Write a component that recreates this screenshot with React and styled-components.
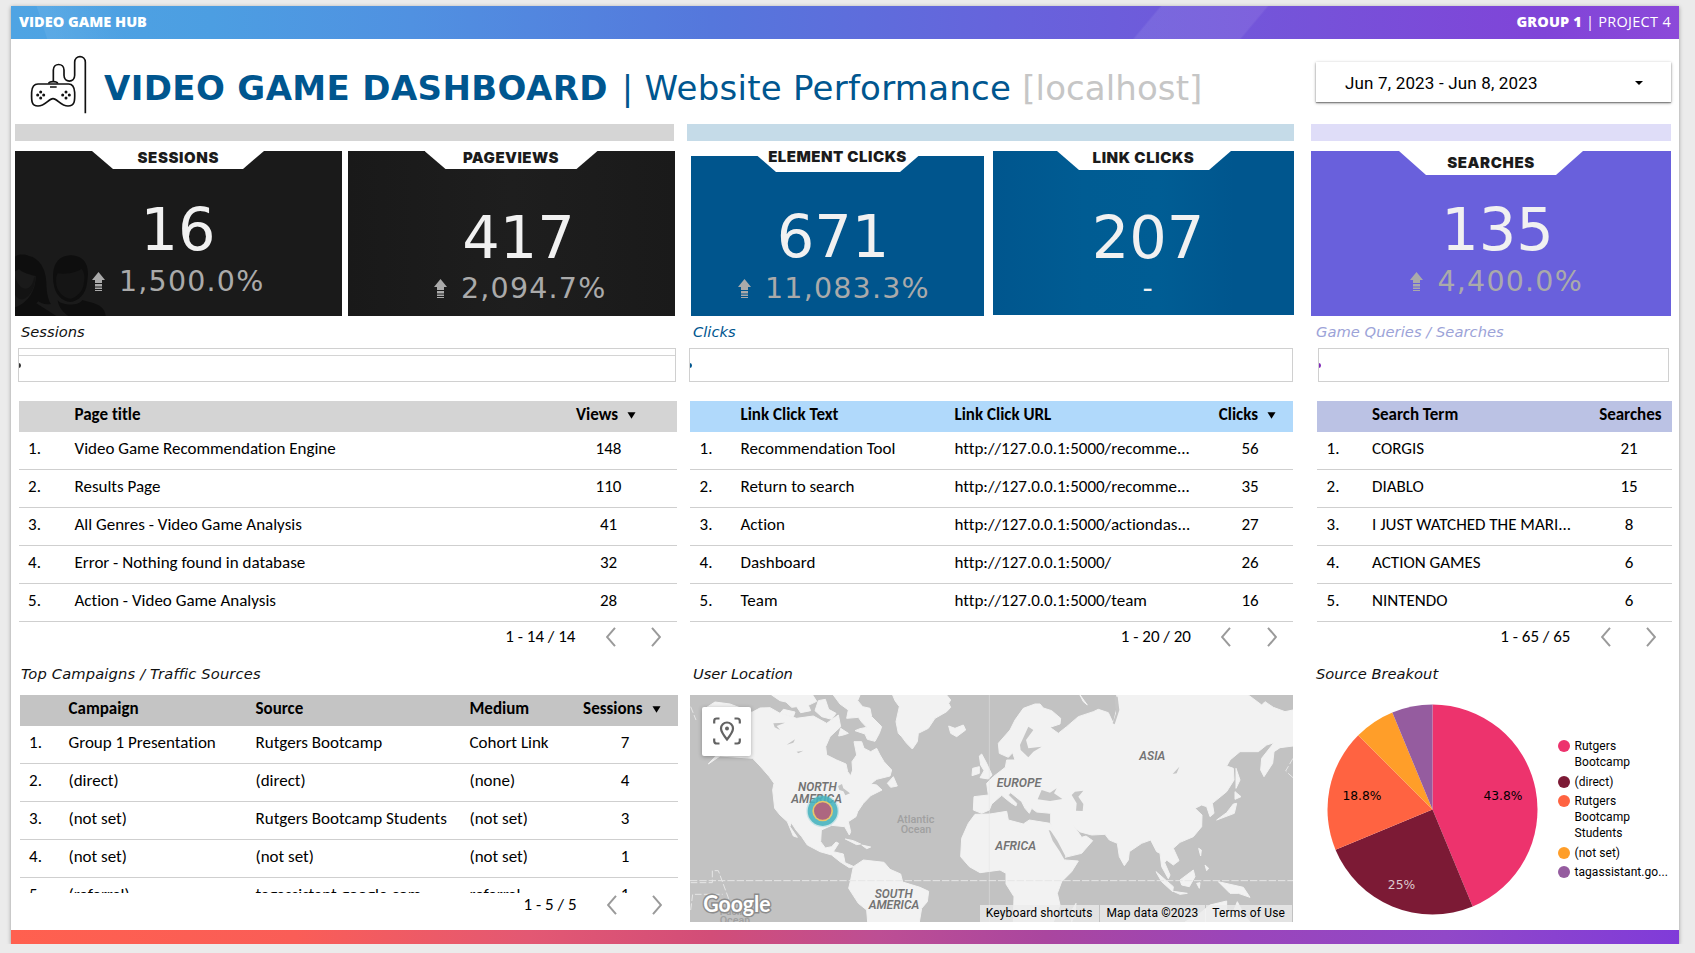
import React from "react";
import styled, { createGlobalStyle } from "styled-components";

const Global = createGlobalStyle`
  * { box-sizing: border-box; }
  body { margin: 0; background: #ebebeb; overflow: hidden; font-family: "DejaVu Sans", sans-serif; color: #000; }
`;

const Page = styled.main`
  width: 1668px;
  height: 938px;
  margin: 6px 0 0 11px;
  background: #fff;
  display: flex;
  flex-direction: column;
  box-shadow: 0 1px 4px rgba(0, 0, 0, 0.35);
`;

const TopBar = styled.header`
  height: 33px;
  flex: none;
  display: flex;
  justify-content: space-between;
  align-items: center;
  padding: 0 8px 2px 8px;
  color: #fff;
  font: 15px/30px "Open Sans", sans-serif;
  background:
    linear-gradient(72deg, transparent 34px, rgba(255, 255, 255, 0.07) 35px, rgba(255, 255, 255, 0.07) 40px, transparent 110px),
    linear-gradient(130deg, transparent 880px, rgba(255, 255, 255, 0.08) 882px, rgba(255, 255, 255, 0.08) 962px, transparent 964px),
    linear-gradient(90deg, #4fa4e3 0%, #4c9ee2 12%, #5091e1 24%, #5577dc 42%, #6763dc 60%, #7652d9 78%, #8044d8 92%, #8c49d9 100%);
`;

const BarText = styled.span`
  font-weight: ${(p) => (p.$light ? 400 : 800)};
  font-size: 14.5px;
  letter-spacing: ${(p) => p.$ls || 0}px;
  white-space: pre;
`;

const BottomBar = styled.footer`
  height: 14.5px;
  margin-top: auto;
  flex: none;
  background: linear-gradient(90deg, #ff604f 0%, #fa5d57 17%, #e35873 31%, #d24d78 42%, #bd4e94 52%, #aa469f 62%, #9a45bb 74%, #9148c8 86%, #803bd9 100%);
`;

const TitleRow = styled.section`
  height: 85px;
  flex: none;
  display: flex;
  align-items: flex-start;
  padding: 16px 8px 0 19px;
`;

const Title = styled.h1`
  margin: 9px auto 0 16px;
  font: 400 34px/48px "DejaVu Sans", sans-serif;
  color: #00568f;
  white-space: pre;
  letter-spacing: 0.25px;
  b { letter-spacing: 0.37px; margin-right: 3px; }
  i { font-style: normal; color: #c6c6c6; letter-spacing: 0.1px; }
`;

const DatePicker = styled.div`
  width: 355px;
  height: 40px;
  margin-top: 7px;
  padding: 2px 28px 0 29px;
  display: flex;
  align-items: center;
  justify-content: space-between;
  background: #fff;
  font: 17px/40px Roboto, sans-serif;
  letter-spacing: 0.17px;
  box-shadow: 0 1px 3px rgba(0, 0, 0, 0.4), 0 1px 1px rgba(0, 0, 0, 0.3);
`;

const Columns = styled.div`
  display: grid;
  grid-template-columns: 672px 624px 361px;
  padding-left: 4px;
  justify-content: start;
`;

const Column = styled.section`
  display: flex;
  flex-direction: column;
`;

const Accent = styled.div`
  height: 17px;
  margin-bottom: 10px;
  width: ${(p) => p.$w}px;
  background: ${(p) => p.$color};
`;

const Cards = styled.div`
  height: 165px;
  display: flex;
  align-items: flex-start;
`;

const CardBox = styled.article`
  position: relative;
  width: ${(p) => p.$w}px;
  height: ${(p) => p.$h || 165}px;
  margin-left: ${(p) => p.$ml || 0}px;
  margin-top: ${(p) => p.$mt || 0}px;
  background: ${(p) => p.$bg};
`;

const Notch = styled.div`
  position: absolute;
  top: -3px;
  left: ${(p) => p.$left}px;
  width: ${(p) => p.$w}px;
  height: ${(p) => p.$h + 3}px;
  background: #fff;
  clip-path: polygon(0 0, 100% 0, 100% 3px, calc(100% - ${(p) => p.$cut}px) 100%, ${(p) => p.$cut}px 100%, 0 3px);
`;

const CardTitle = styled.h2`
  position: absolute;
  left: 0;
  top: ${(p) => p.$top}px;
  margin: 0;
  width: 100%;
  text-align: center;
  font: 900 15px/20px Inter, sans-serif;
  letter-spacing: ${(p) => p.$ls ?? 0.6}px;
  color: #1b1b1b;
`;

const Score = styled.div`
  position: absolute;
  top: ${(p) => p.$top}px;
  left: ${(p) => p.$left}px;
  width: 200px;
  text-align: center;
  font-size: 59px;
  line-height: 70px;
  color: #f1f1f1;
`;

const Delta = styled.div`
  position: absolute;
  top: ${(p) => p.$top}px;
  left: ${(p) => p.$left}px;
  display: flex;
  align-items: center;
  gap: 14.5px;
  font-size: 28.5px;
  line-height: 36px;
  letter-spacing: 1.2px;
  color: ${(p) => p.$color || "#aaa"};
  white-space: pre;
`;

const People = styled.svg`
  position: absolute;
  left: 0;
  bottom: 0;
`;

const Label = styled.h3`
  margin: 0;
  height: ${(p) => p.$h}px;
  padding: ${(p) => p.$pt}px 0 0 ${(p) => p.$pl}px;
  font: italic 400 14.7px/20px "DejaVu Sans", sans-serif;
  letter-spacing: ${(p) => p.$ls ?? 0}px;
  color: ${(p) => p.$color || "#111"};
`;

const Strip = styled.div`
  width: ${(p) => p.$w}px;
  height: 34px;
  margin: 0 0 18.5px ${(p) => p.$ml}px;
  border: 1.5px solid #d0d0d0;
  display: flex;
  align-items: center;
  overflow: hidden;
  background: ${(p) => (p.$line ? "linear-gradient(transparent 6px, #d4d4d4 6px, #d4d4d4 7.5px, transparent 7.5px)" : "none")};
  &::before {
    content: "";
    width: 3px;
    height: 5px;
    margin-left: -1px;
    border-radius: 0 3px 3px 0;
    background: ${(p) => p.$dot};
  }
`;

const Table = styled.div`
  margin-left: ${(p) => p.$ml}px;
  width: ${(p) => p.$w}px;
  height: ${(p) => p.$h || "auto"};
  overflow: hidden;
  font: 17px/20px Carlito, Lato, sans-serif;
  font-variant-ligatures: none;
`;

const Row = styled.div`
  display: grid;
  grid-template-columns: ${(p) => p.$cols};
  height: 38px;
  padding-bottom: 2px;
  align-items: center;
  border-bottom: 1.5px solid #cfcfcf;
  white-space: pre;
`;

const HeadRow = styled(Row)`
  height: 31px;
  padding-bottom: 2px;
  border: 0;
  background: ${(p) => p.$bg};
  font-weight: 700;
`;

const Cell = styled.span`
  text-align: ${(p) => (p.$center ? "center" : "left")};
`;

const IndexCell = styled.span`
  padding-left: 9.5px;
`;

const SortCell = styled.span`
  display: flex;
  justify-content: flex-end;
  align-items: center;
  gap: 9px;
`;

const Pager = styled.nav`
  height: 30px;
  display: flex;
  align-items: center;
  justify-content: flex-end;
  padding-right: ${(p) => p.$pr}px;
  margin-top: ${(p) => p.$mt || 0}px;
  font: 17px/20px Carlito, Lato, sans-serif;
  svg { margin-left: 30px; }
  svg + svg { margin-left: 35.5px; }
`;

const MapFrame = styled.div`
  position: relative;
  width: 603px;
  height: 227px;
  margin-left: 3px;
  overflow: hidden;
`;

const MapButton = styled.div`
  position: absolute;
  left: 12px;
  top: 12px;
  width: 49px;
  height: 49px;
  border-radius: 2px;
  background: #fff;
  display: grid;
  place-items: center;
  box-shadow: 0 1px 4px rgba(0, 0, 0, 0.3);
`;

const Credits = styled.div`
  position: absolute;
  right: 1px;
  bottom: 0;
  display: flex;
  gap: 1px;
  font: 12px/17px Roboto, sans-serif;
  letter-spacing: 0.14px;
  span { background: rgba(236, 236, 236, 0.78); padding: 0 7px 0 6px; white-space: nowrap; }
`;

const PieRow = styled.div`
  display: flex;
  align-items: center;
  height: 229px;
  margin-bottom: -2px;
  padding-left: 16px;
`;

const Legend = styled.ul`
  list-style: none;
  margin: 0 0 0 19.5px;
  padding: 0;
  display: flex;
  flex-direction: column;
  gap: 3.5px;
  font: 12px/16px Roboto, sans-serif;
  letter-spacing: 0.05px;
  li { display: flex; gap: 5px; white-space: pre-line; }
  li::before { content: ""; flex: none; width: 12px; height: 12px; margin-top: 2px; border-radius: 50%; background: var(--dot); }
`;

const LegendItem = styled.li`
  --dot: ${(p) => p.$color};
`;

const Controller = () => (
  <svg width="58" height="60" viewBox="60 15 174 180" fill="none" stroke="#111" strokeWidth="5">
    <path d="M130 94V60c0-22 32-22 32 0v16c0 23 32 23 32 0V37c0-23 32-23 32 0v153" />
    <path d="M84 102h92c13 0 17 9 18 25 1 27 0 41-20 41-22 0-32-22-45-22s-23 22-45 22c-20 0-20-16-19-42 1-16 6-24 19-24z" />
    <path d="M116 101c1-8 26-8 27 0M120 111h20" />
    <g fill="#111" stroke="none">
      <circle cx="92" cy="126" r="4.5" /><circle cx="92" cy="144" r="4.5" /><circle cx="83" cy="135" r="4.5" /><circle cx="101" cy="135" r="4.5" />
      <circle cx="168" cy="126" r="4.5" /><circle cx="168" cy="144" r="4.5" /><circle cx="158" cy="135" r="4.5" /><circle cx="178" cy="135" r="4.5" />
    </g>
  </svg>
);

const UpArrow = () => (
  <svg width="13" height="20" viewBox="0 0 13 20" fill="currentColor">
    <path d="M6.5 0 13 8H10v3H3V8H0zM3 12h7v2.5H3zM3 15.5h7v1.5H3zM3 18h7v1H3z" />
  </svg>
);

const Sort = () => (
  <svg width="9" height="7" viewBox="0 0 9 7"><path d="M.5.3h8L4.500 6.700z" /></svg>
);

const Chevron = ({ next }) => (
  <svg width="10" height="20" viewBox="0 0 10 20" fill="none" stroke="#9a9a9a" strokeWidth="2">
    <path d={next ? "M1 .8 9 10 1 19.2" : "M9 .8 1 10 9 19.2"} />
  </svg>
);

function Card({ w, h, ml, mt, bg, notch, title, titleTop, titleLs, value, scoreTop, scoreLeft, delta, deltaTop, deltaLeft, children }) {
  return (
    <CardBox $w={w} $h={h} $ml={ml} $mt={mt} $bg={bg}>
      {children}
      <Notch $left={notch[0]} $w={notch[1]} $h={notch[2]} $cut={notch[3]} />
      <CardTitle $top={titleTop} $ls={titleLs}>{title}</CardTitle>
      <Score $top={scoreTop} $left={scoreLeft}>{value}</Score>
      {delta === "-" ? (
        <Delta $top={deltaTop} $left={deltaLeft} $color="#f1f1f1">-</Delta>
      ) : (
        <Delta $top={deltaTop} $left={deltaLeft}><UpArrow />{delta}</Delta>
      )}
    </CardBox>
  );
}

function DataTable({ ml, w, h, cols, headCols, bg, head, rows, noSort }) {
  return (
    <Table $ml={ml} $w={w} $h={h}>
      <HeadRow $cols={headCols} $bg={bg}>
        <span />
        {head.map((t, i) =>
          i === head.length - 1 ? <SortCell key={t}>{t}{!noSort && <Sort />}</SortCell> : <Cell key={t}>{t}</Cell>
        )}
      </HeadRow>
      {rows.map((r, n) => (
        <Row key={n} $cols={cols}>
          <IndexCell>{n + 1}.</IndexCell>
          {r.map((t, i) => <Cell key={i} $center={i === r.length - 1}>{t}</Cell>)}
        </Row>
      ))}
    </Table>
  );
}

const Pages = ({ text, pr, mt }) => (
  <Pager $pr={pr} $mt={mt}>{text}<Chevron /><Chevron next /></Pager>
);

const land = [
  "68,90 105,66 150,72 216,97 240,84 270,83 300,100 350,115 400,108 440,130 475,105 482,140 450,170 437,200 440,225 470,240 498,252 503,275 512,287 518,270 516,245 530,225 522,185 545,185 552,205 572,215 590,205 600,225 612,245 635,270 630,288 590,298 572,312 590,315 606,330 572,347 550,370 533,395 528,410 505,425 512,455 508,465 494,440 455,436 424,450 422,485 436,504 455,500 468,486 476,490 460,515 490,522 495,548 522,560 508,563 480,545 455,525 420,515 382,495 365,470 348,450 334,428 330,440 352,472 340,468 322,425 300,405 284,385 278,330 282,310 268,290 240,258 218,235 120,228 85,252 110,225 68,200",
  "275,45 300,62 318,66 335,82 350,80 362,98 392,92 385,76 410,64 398,45",
  "310,88 345,96 340,110 300,100", "415,62 436,58 446,88 468,100 455,118 425,110 405,92",
  "460,45 540,45 533,62 548,80 570,85 575,110 605,140 598,160 585,184 562,178 555,162 525,152 540,146 560,142 545,126 535,112 500,115 505,90 480,72",
  "482,145 505,160 490,165 476,168",
  "638,45 645,62 658,80 648,125 655,160 665,170 680,190 697,207 712,185 715,160 745,145 765,115 800,95 812,82 806,70 812,60 800,45",
  "806,138 825,145 850,135 857,150 830,170 812,160",
  "622,310 640,290 652,318 632,322",
  "496,477 520,482 542,492 530,494", "545,495 572,501 560,506",
  "520,560 550,540 612,547 630,568 662,582 668,606 720,622 746,634 742,665 725,685 718,726 563,726 560,690 535,670 506,625 512,600",
  "845,475 865,430 885,403 930,402 980,394 985,420 1030,432 1048,420 1110,430 1124,455 1140,500 1155,540 1195,543 1175,575 1145,605 1132,640 1140,675 1120,726 1000,726 1002,650 978,612 978,580 960,570 900,578 868,560 842,530",
  "882,350 880,390 905,400 928,390 935,372 965,346 992,368 1008,378 1010,370 985,345 992,338 1025,365 1035,385 1048,400 1055,385 1070,396 1112,400 1112,430 1125,470 1155,532 1205,520 1238,482 1218,468 1205,472 1180,435 1198,455 1235,465 1275,463 1288,480 1312,490 1318,530 1333,557 1345,540 1348,515 1385,490 1412,480 1430,515 1440,520 1445,560 1465,596 1470,585 1454,548 1460,540 1480,555 1497,542 1480,505 1500,487 1540,470 1565,440 1566,405 1545,385 1565,375 1580,380 1590,410 1602,400 1597,370 1640,335 1662,300 1660,265 1640,258 1650,240 1680,215 1735,215 1760,195 1782,188 1745,235 1742,270 1752,290 1778,250 1782,215 1800,203 1839,198 1839,90 1815,95 1780,82 1755,65 1745,75 1705,45 1310,45 1314,70 1300,130 1285,98 1255,88 1240,95 1195,110 1160,140 1135,160 1110,142 1140,132 1142,115 1115,92 1090,84 1080,72 1065,72 1030,85 1005,120 990,150 955,190 958,220 985,232 998,218 1005,240 980,240 976,262 940,290 920,310 925,345",
  "898,228 905,222 920,250 936,285 925,297 900,293 912,272 902,255", "878,265 898,260 898,280 876,287",
  "1668,265 1680,300 1668,325", "1665,335 1683,350 1665,358", "1660,372 1670,370 1663,400 1610,420 1640,398",
  "1428,575 1480,620 1478,635 1445,605", "1480,634 1522,640 1500,643", "1500,600 1540,570 1545,590 1528,620 1505,615",
  "1615,605 1690,622 1710,652 1675,640 1650,640", "1556,505 1564,510 1562,528", "1575,555 1586,565 1580,572",
  "1550,610 1560,608 1558,625", "1515,726 1560,700 1590,675 1640,663 1640,690 1660,695 1672,665 1690,700 1710,726",
  "1170,700 1188,670 1185,700 1175,726", "1200,45 1222,75 1210,65",
];
const water = [
  "1045,140 1060,150 1038,180 1045,205 1085,200 1060,215 1045,232 1022,210 1020,195",
  "1073,358 1085,330 1110,338 1130,325 1122,340 1147,357 1110,363",
  "1175,345 1185,335 1210,332 1195,350 1210,372 1208,393 1188,392 1190,370",
  "1303,50 1313,50 1318,90 1304,133 1298,130 1308,100", "280,130 315,128 290,138 300,150 284,142", "320,194 345,178 340,188", "1478,282 1498,260 1490,280",
  "1106,450 1112,452 1132,482 1156,528 1154,540 1138,512 1118,482",
  "474,318 486,312 490,325 510,340 496,346 490,334 478,330", "350,215 370,212 355,220",
];
const labels = [
  ["NORTH", 412, 333, 38, 116], ["AMERICA", 410, 368, 37, 152], ["SOUTH", 641, 654, 37, 114], ["AMERICA", 642, 687, 37, 152],
  ["EUROPE", 1017, 321, 37, 134], ["ASIA", 1417, 241, 37, 78], ["AFRICA", 1007, 511, 37, 122],
];

function WorldMap() {
  return (
    <MapFrame>
      <svg width="603" height="227" viewBox="30 45 1809 681" preserveAspectRatio="none" fontFamily="Roboto, sans-serif" textAnchor="middle">
        <rect x="30" y="45" width="1809" height="681" fill="#c2c2c2" />
        <g fill="#f2f2f2" stroke="#f2f2f2" strokeWidth="3" strokeLinejoin="round">
          {land.map((p) => <polygon key={p} points={p} />)}
        </g>
        <g fill="#c5c5c5">{water.map((p) => <polygon key={p} points={p} />)}</g>
        <g stroke="#e6e6e6" strokeWidth="3" fill="none">
          <path d="M30 602H1839" strokeDasharray="22 6" />
          <path d="M928 45V726" opacity=".5" />
          <path d="M32 608h65V572h18l35 95M32 690l6-47h90M32 80l16 40M1839 235l-22 38 22 20" strokeDasharray="20 7" />
        </g>
        <g fontStyle="italic" fill="#737373" stroke="#f5f5f5" strokeWidth="3" paintOrder="stroke" fontWeight="600">
          {labels.map(([t, x, y, s, l], i) => <text key={i} x={x} y={y} fontSize={s} textLength={l} lengthAdjust="spacingAndGlyphs">{t}</text>)}
        </g>
        <g fill="#a0a0a0" fontSize="32" fontWeight="500">
          <text x="707" y="430" textLength="112" lengthAdjust="spacingAndGlyphs">Atlantic</text>
          <text x="708" y="459" textLength="92" lengthAdjust="spacingAndGlyphs">Ocean</text>
          <text x="165" y="705" textLength="92" lengthAdjust="spacingAndGlyphs">Pacific</text>
          <text x="165" y="731" textLength="92" lengthAdjust="spacingAndGlyphs">Ocean</text>
        </g>
        <circle cx="428" cy="393" r="49" fill="#4fb9c4" opacity=".25" />
        <circle cx="428" cy="393" r="45" fill="#45b3bd" opacity=".85" />
        <circle cx="428" cy="393" r="31" fill="#e8c66a" />
        <circle cx="428" cy="393" r="26" fill="#ad6780" />
        <text x="171" y="697" fontSize="68" fontFamily="Lato, sans-serif" fontWeight="700" textLength="202" lengthAdjust="spacingAndGlyphs" fill="#fff" stroke="#8c8c8c" strokeWidth="9" paintOrder="stroke">Google</text>
      </svg>
      <MapButton>
        <svg width="28" height="28" viewBox="0 0 28 28" fill="none" stroke="#636363" strokeWidth="2.2">
          <path d="M1.2 6.5V4q0-2.500 2.500-2.500h2.800M21.500 1.500h2.800q2.500 0 2.500 2.500v2.500M26.800 21.500v2.500q0 2.500-2.500 2.500h-2.800M6.500 26.500H3.700q-2.500 0-2.500-2.500v-2.500" />
          <path d="M14 22.500C10 17.500 8 14.500 8 11.500a6 6 0 0 1 12 0c0 3-2 6-6 11z" />
          <circle cx="14" cy="11.500" r="2" fill="#636363" stroke="none" />
        </svg>
      </MapButton>
      <Credits><span>Keyboard shortcuts</span><span>Map data ©2023</span><span>Terms of Use</span></Credits>
    </MapFrame>
  );
}

const slices = [
  [7, "#ed336d"], [4, "#7c1a35"], [3, "#ff6341"], [1, "#ff9e29"], [1, "#955c9f"],
];

function Pie() {
  let a = 0;
  const pt = (t) => `${105.5 + 105 * Math.sin(t)} ${105.5 - 105 * Math.cos(t)}`;
  return (
    <svg width="211" height="211" fontSize="12.300" textAnchor="middle" fontFamily="DejaVu Sans, sans-serif">
      {slices.map(([n, c]) => {
        const from = a;
        a += (n / 16) * 2 * Math.PI;
        return <path key={c} d={`M105.500 105.500L${pt(from)}A105 105 0 0 1 ${pt(a)}Z`} fill={c} />;
      })}
      <text x="176" y="96">43.8%</text>
      <text x="35" y="96">18.8%</text>
      <text x="74.500" y="185" fill="#dcc8ce">25%</text>
    </svg>
  );
}

export default function App() {
  return (
    <>
      <Global />
      <Page>
        <TopBar>
          <BarText>VIDEO GAME HUB</BarText>
          <span><BarText $ls={0.15}>GROUP 1 </BarText><BarText $light $ls={0.3}>| PROJECT 4</BarText></span>
        </TopBar>
        <TitleRow>
          <Controller />
          <Title><b>VIDEO GAME DASHBOARD</b> | Website Performance <i>[localhost]</i></Title>
          <DatePicker>
            Jun 7, 2023 - Jun 8, 2023
            <svg width="8" height="4" viewBox="0 0 8 4"><path d="M0 0h8L4 4z" /></svg>
          </DatePicker>
        </TitleRow>
        <Columns>
          <Column>
            <Accent $w={659} $color="#d5d5d5" />
            <Cards>
              <Card w={326.5} bg="#1a1a1a" notch={[77, 172, 18, 21]} title="SESSIONS" titleTop={-3.5} value="16"
                scoreTop={44} scoreLeft={63} delta="1,500.0%" deltaTop={113} deltaLeft={76.5}>
                <People width="92" height="62" viewBox="0 0 276 186" fill="#0e0e0e">
                  <path d="M0 8C10 0 28 0 42 6c30 6 50 36 52 78 0 36 8 60 14 66-20 4-30-4-38-8l-6 6 60 38H0v-26c40-12 64-56 62-94-30-6-44-14-50-20L0 52z" />
                  <path d="M0 66c12 50 52 52 58 0 8 30-16 68-36 70-12 0-18-8-22-14z" fill="#131313" />
                  <path d="M116 90c-6-46 4-84 52-86 44 2 58 34 48 84-4 34-26 54-50 56-26-2-46-24-50-54z" fill="#0e0e0e" />
                  <path d="M124 92c-2-20 0-26 4-34 34 4 62-6 72-14 10 14 10 30 6 46-2 24-24 42-40 44-20-2-38-20-42-42z" fill="#151515" />
                  <path d="M128 138c8 16 64 20 74 0 26 8 68 12 70 48H160c-14-10-30-26-32-48z" />
                </People>
              </Card>
              <Card w={327} ml={6} bg="linear-gradient(90deg,#191919,#1e1e1e 50%,#1a1a1a)" notch={[77, 173, 18, 21]} title="PAGEVIEWS" titleTop={-3.5} titleLs={0.5}
                value="417" scoreTop={51.5} scoreLeft={71} delta="2,094.7%" deltaTop={120} deltaLeft={86} />
            </Cards>
            <Label $h={32} $pt={6} $pl={6}>Sessions</Label>
            <Strip $w={658} $ml={3} $dot="#333" $line />
            <DataTable ml={3.5} w={658} bg="#d4d4d4" cols="56px 488px 92px" headCols="56px 488px 73.5px"
              head={["Page title", "Views"]}
              rows={[["Video Game Recommendation Engine", "148"], ["Results Page", "110"], ["All Genres - Video Game Analysis", "41"], ["Error - Nothing found in database", "32"], ["Action - Video Game Analysis", "28"]]} />
            <Pages text="1 - 14 / 14" pr={26} />
            <Label $h={43} $pt={12.5} $pl={6} $ls={0.15}>Top Campaigns / Traffic Sources</Label>
            <DataTable ml={4.5} w={658} h="198px" bg="#c4c4c4" cols="49px 187px 214px 106px 99px" headCols="49px 187px 214px 105px 86px"
              head={["Campaign", "Source", "Medium", "Sessions"]}
              rows={[["Group 1 Presentation", "Rutgers Bootcamp", "Cohort Link", "7"], ["(direct)", "(direct)", "(none)", "4"], ["(not set)", "Rutgers Bootcamp Students", "(not set)", "3"], ["(not set)", "(not set)", "(not set)", "1"], ["(referral)", "tagassistant.google.com", "referral", "1"]]} />
            <Pages text="1 - 5 / 5" pr={25} mt={-2.5} />
          </Column>
          <Column>
            <Accent $w={607} $color="#c5dbe8" />
            <Cards>
              <Card w={293} h={160} ml={4} mt={4.5} bg="#00558d" notch={[66, 162, 16.5, 19]} title="ELEMENT CLICKS" titleTop={-8.5} titleLs={0.5}
                value="671" scoreTop={46.5} scoreLeft={42} delta="11,083.3%" deltaTop={115.5} deltaLeft={46.5} />
              <Card w={301} h={164} ml={9} bg="linear-gradient(90deg,#00568e,#005c93 30%,#005d94 55%,#00568e 80%)" notch={[64, 174, 19, 22]} title="LINK CLICKS" titleTop={-3.5}
                value="207" scoreTop={51.5} scoreLeft={55} delta="-" deltaTop={120} deltaLeft={149.5} />
            </Cards>
            <Label $h={32} $pt={6} $pl={6} $color="#00568f">Clicks</Label>
            <Strip $w={604} $ml={2} $dot="#00568f" />
            <DataTable ml={3} w={603} bg="#b0d9fb" cols="50.5px 214px 255px 81px" headCols="50.5px 214px 255px 66.5px"
              head={["Link Click Text", "Link Click URL", "Clicks"]}
              rows={[["Recommendation Tool", "http://127.0.0.1:5000/recomme...", "56"], ["Return to search", "http://127.0.0.1:5000/recomme...", "35"], ["Action", "http://127.0.0.1:5000/actiondas...", "27"], ["Dashboard", "http://127.0.0.1:5000/", "26"], ["Team", "http://127.0.0.1:5000/team", "16"]]} />
            <Pages text="1 - 20 / 20" pr={34.5} />
            <Label $h={43} $pt={12.5} $pl={6} $ls={-0.05}>User Location</Label>
            <WorldMap />
          </Column>
          <Column>
            <Accent $w={360} $color="#dfddf8" />
            <Cards>
              <Card w={360} bg="#6960dc" notch={[88, 184, 24, 27]} title="SEARCHES" titleTop={1.5}
                value="135" scoreTop={44} scoreLeft={86.5} delta="4,400.0%" deltaTop={113} deltaLeft={99} />
            </Cards>
            <Label $h={32} $pt={6} $pl={5} $ls={0.04} $color="#9ca3d8">Game Queries / Searches</Label>
            <Strip $w={351} $ml={7} $dot="#8028b8" />
            <DataTable ml={6} w={355} bg="#bbc2e4" cols="55px 214px 1fr" headCols="55px 214px 75.5px" noSort
              head={["Search Term", "Searches"]}
              rows={[["CORGIS", "21"], ["DIABLO", "15"], ["I JUST WATCHED THE MARI...", "8"], ["ACTION GAMES", "6"], ["NINTENDO", "6"]]} />
            <Pages text="1 - 65 / 65" pr={16} />
            <Label $h={43} $pt={12.5} $pl={5}>Source Breakout</Label>
            <PieRow>
              <Pie />
              <Legend>
                <LegendItem $color="#ed336d">{"Rutgers\nBootcamp"}</LegendItem>
                <LegendItem $color="#7c1a35">(direct)</LegendItem>
                <LegendItem $color="#ff6341">{"Rutgers\nBootcamp\nStudents"}</LegendItem>
                <LegendItem $color="#ff9e29">(not set)</LegendItem>
                <LegendItem $color="#955c9f">tagassistant.go...</LegendItem>
              </Legend>
            </PieRow>
          </Column>
        </Columns>
        <BottomBar />
      </Page>
    </>
  );
}
